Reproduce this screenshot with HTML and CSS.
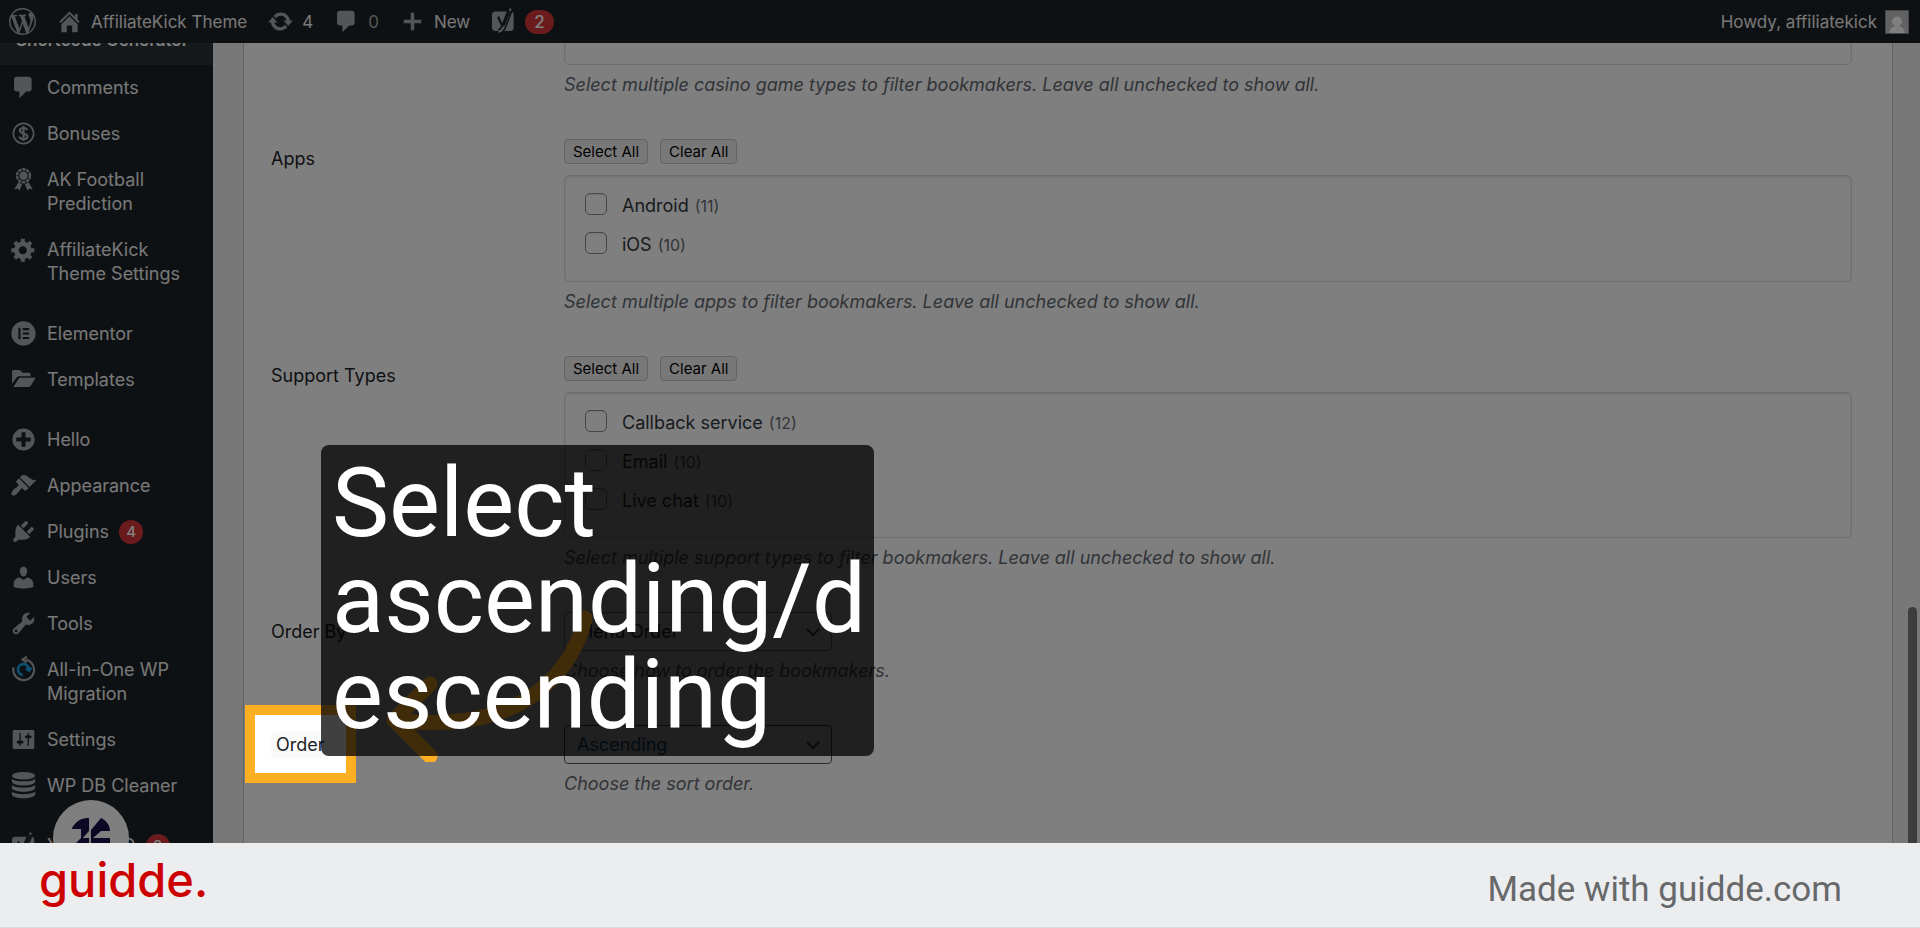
FILE: index.html
```html
<!DOCTYPE html>
<html lang="en">
<head>
  <meta charset="utf-8">
  <title>Shortcode Generator - AffiliateKick Theme</title>
  <link rel="stylesheet" href="styles.css">
</head>
<body>

<div class="stage">

<header class="topbar">
  <a href="#" class="item" aria-label="WordPress"><svg class="icon" viewBox="0 0 20 20"><path d="M20 10c0-5.51-4.49-10-10-10C4.48 0 0 4.49 0 10c0 5.52 4.48 10 10 10 5.51 0 10-4.48 10-10zM7.78 15.37L4.37 6.22c.55-.02 1.17-.08 1.17-.08.5-.06.44-1.13-.06-1.11 0 0-1.45.11-2.37.11-.18 0-.37 0-.58-.01C4.12 2.69 6.87 1.11 10 1.11c2.33 0 4.45.87 6.05 2.34-.68-.11-1.65.39-1.65 1.58 0 .74.45 1.36.9 2.1.35.61.55 1.36.55 2.46 0 1.49-1.4 5-1.4 5l-3.03-8.37c.54-.02.82-.17.82-.17.5-.05.44-1.25-.06-1.22 0 0-1.44.12-2.38.12-.87 0-2.33-.12-2.33-.12-.5-.03-.56 1.2-.06 1.22l.92.08 1.26 3.41zM17.41 10c.24-.64.74-1.87.43-4.25.7 1.29 1.05 2.71 1.05 4.25 0 3.29-1.73 6.24-4.4 7.78.97-2.59 1.94-5.2 2.92-7.78zM6.1 18.09C3.12 16.65 1.11 13.53 1.11 10c0-1.3.23-2.48.72-3.59C3.25 10.3 4.67 14.2 6.1 18.09zm4.03-6.63l2.58 6.98c-.86.29-1.76.45-2.71.45-.79 0-1.57-.11-2.29-.33.81-2.38 1.62-4.74 2.42-7.1z"/></svg></a>
  <a href="#" class="item"><svg class="icon" viewBox="0 0 20 20"><path d="M16 8.5l1.53 1.53-1.06 1.06L10 4.6l-6.47 6.49-1.06-1.06L10 2.5l4 4v-2h2v4zm-6-2.46l6 5.99V18h-4v-5H8v5H4v-5.97z"/></svg>AffiliateKick Theme</a>
  <a href="#" class="item"><svg class="icon" viewBox="0 0 20 20"><path d="M10.2 3.28c3.53 0 6.43 2.61 6.92 6h2.08l-3.5 4-3.5-4h2.32c-.45-1.97-2.21-3.45-4.32-3.45-1.45 0-2.73.71-3.54 1.78L4.95 5.66C6.23 4.2 8.11 3.28 10.2 3.28zm-.4 13.44c-3.52 0-6.43-2.61-6.92-6H.8l3.5-4c1.17 1.33 2.33 2.67 3.5 4H5.48c.45 1.97 2.21 3.45 4.32 3.45 1.45 0 2.73-.71 3.54-1.78l1.71 1.95c-1.28 1.46-3.15 2.38-5.25 2.38z"/></svg>4</a>
  <a href="#" class="item"><svg class="icon" viewBox="0 0 20 20"><path d="M5 2h9c1.1 0 2 .9 2 2v7c0 1.1-.9 2-2 2h-2l-5 5v-5H5c-1.1 0-2-.9-2-2V4c0-1.1.9-2 2-2z"/></svg><span class="none">0</span></a>
  <a href="#" class="item"><svg class="icon" viewBox="0 0 20 20"><path d="M16.5 8.7v2.6h-5.2v5.2H8.7v-5.2H3.5V8.7h5.2V3.5h2.6v5.2z"/></svg>New</a>
  <a href="#" class="item" aria-label="Yoast SEO"><svg class="icon" viewBox="0 0 20 20"><rect x="1.500" y="2.500" width="16" height="14.500" rx="2.500"/><path class="cut wide" d="M15.300 .5L10.500 13c-1 2.900-2 4.300-4.500 4.500"/><path class="line" d="M15.300 .5L10.500 13c-1 2.900-2 4.300-4.500 4.500"/><path class="cut" d="M6 6.500l3.300 7.500M14.700 2L10 13"/></svg><span class="badge">2</span></a>
  <a href="#" class="item account">Howdy, affiliatekick
    <svg class="avatar" viewBox="0 0 24 24"><rect class="frame" width="24" height="24"/><rect class="photo" x="1" y="1" width="22" height="22"/><circle class="person" cx="12" cy="11.500" r="5"/><path class="person" d="M4 23c1-5 4-7 8-7s7 2 8 7z"/></svg></a>
</header>

<div class="admin">

<nav class="sidebar">
  <a href="#" class="current">Shortcode Generator</a>
  <ul>
    <li><a href="#"><svg class="icon" viewBox="0 0 20 20"><path d="M5 2h9c1.100 0 2 .9 2 2v7c0 1.100-.9 2-2 2h-2l-5 5v-5H5c-1.100 0-2-.9-2-2V4c0-1.100.9-2 2-2z"/></svg>Comments</a></li>
    <li><a href="#"><svg class="icon" viewBox="0 0 20 20"><circle class="line thin" cx="10" cy="10" r="7.500"/><path class="line" d="M12.700 7.400c-.3-1-1.300-1.500-2.700-1.500-1.600 0-2.700.7-2.700 1.900 0 2.900 5.600 1.400 5.600 4.400 0 1.300-1.200 2-2.900 2s-2.800-.7-3-1.900M10 4.400v11.200"/></svg>Bonuses</a></li>
    <li><a href="#"><svg class="icon" viewBox="0 0 20 20"><circle cx="10" cy="7.200" r="3.100"/><circle class="line dotted" cx="10" cy="7.200" r="4.800"/><path d="M6.300 12l2.700 1.600-2 4.700-1.200-1.700-2.700.8zM13.700 12L11 13.600l2 4.700 1.200-1.700 2.700.8z"/></svg>AK Football Prediction</a></li>
    <li><a href="#"><svg class="icon" viewBox="0 0 20 20"><path d="M18 12h-2.180c-.17.7-.44 1.350-.81 1.930l1.540 1.540-2.100 2.100-1.540-1.540c-.58.36-1.230.63-1.910.79V19H8v-2.180c-.68-.16-1.330-.43-1.910-.79l-1.540 1.540-2.120-2.120 1.540-1.540c-.36-.58-.63-1.230-.79-1.910H1V9.030h2.170c.16-.7.44-1.350.8-1.940L2.430 5.550l2.100-2.100 1.540 1.540c.58-.37 1.240-.64 1.930-.81V2h3v2.180c.68.16 1.330.43 1.910.79l1.540-1.540 2.120 2.120-1.540 1.540c.36.59.64 1.240.8 1.940H18V12zm-8.500 1.500c1.660 0 3-1.340 3-3s-1.340-3-3-3-3 1.340-3 3 1.340 3 3 3z"/></svg>AffiliateKick Theme Settings</a></li>
    <li class="group"><a href="#"><svg class="icon" viewBox="0 0 20 20"><circle cx="10" cy="10" r="9"/><path class="cut" d="M7 5.800v8.400M9.500 6.700h4.700M9.500 10h4.700M9.500 13.300h4.700"/></svg>Elementor</a></li>
    <li><a href="#"><svg class="icon" viewBox="0 0 20 20"><path d="M1.500 13V4.500c0-.8.5-1.500 1.500-1.500h4c1.200 0 1.500 2 2.500 2h4.500c.8 0 1.200.5 1.200 1.200V7.500H7c-1 0-1.500.3-2 1zM2.500 15.500l3.800-5.800c.4-.7.9-1 1.700-1h11l-3.500 5.800c-.4.7-.9 1-1.700 1z"/></svg>Templates</a></li>
    <li class="group"><a href="#"><svg class="icon" viewBox="0 0 20 20"><circle cx="10" cy="10" r="8.200"/><path class="cut bold" d="M10 4.600v10.800M4.600 10h10.800"/></svg>Hello</a></li>
    <li><a href="#"><svg class="icon" viewBox="0 0 20 20"><path d="M14.480 11.060L7.410 3.990l1.500-1.500c.5-.56 2.300-.47 3.510.32 1.210.8 1.430 1.280 2.910 2.100 1.180.64 2.450 1.260 4.450.85zm-.71.71L6.700 4.700 4.930 6.470c-.39.39-.39 1.020 0 1.410l1.060 1.060c.39.39.39 1.030 0 1.420-.6.6-1.430 1.110-2.210 1.690-.35.26-.7.53-1.010.84C1.430 14.230.4 16.080 1.400 17.070c.99 1 2.840-.03 4.180-1.360.31-.31.58-.66.85-1.020.57-.78 1.080-1.610 1.690-2.210.39-.39 1.020-.39 1.410 0l1.060 1.060c.39.39 1.020.39 1.410 0z"/></svg>Appearance</a></li>
    <li><a href="#"><svg class="icon" viewBox="0 0 20 20"><path d="M13.110 4.360L9.870 7.600 8 5.730l3.240-3.240c.35-.34 1.050-.2 1.560.32.52.51.66 1.210.31 1.550zm-8 1.770l.91-1.120 9.010 9.010-1.190.84c-.71.71-2.630 1.160-3.820 1.160H6.140L4.900 17.260c-.59.59-1.540.59-2.120 0-.59-.58-.59-1.530 0-2.120l1.240-1.240v-3.880c0-1.130.4-3.190 1.090-3.890zm7.260 3.970l3.240-3.240c.34-.35 1.040-.21 1.550.31.52.51.66 1.210.31 1.550l-3.240 3.250z"/></svg>Plugins <span class="badge">4</span></a></li>
    <li><a href="#"><svg class="icon" viewBox="0 0 20 20"><path d="M10 9.250c-2.270 0-2.730-3.440-2.730-3.440C7 4.020 7.820 2 9.970 2c2.160 0 2.980 2.020 2.710 3.810 0 0-.41 3.440-2.680 3.440zm0 2.570L12.720 10c2.390 0 4.520 2.330 4.520 4.530v2.490s-3.650 1.130-7.240 1.130c-3.650 0-7.240-1.130-7.240-1.130v-2.490c0-2.250 1.940-4.480 4.470-4.480z"/></svg>Users</a></li>
    <li><a href="#"><svg class="icon" viewBox="0 0 20 20"><path d="M16.680 9.770c-1.340 1.340-3.300 1.670-4.950.99l-5.410 6.520c-.99.99-2.590.99-3.580 0s-.99-2.590 0-3.570l6.520-5.420c-.68-1.650-.35-3.610.99-4.950 1.280-1.280 3.120-1.620 4.720-1.060l-2.890 2.890 2.820 2.820 2.860-2.870c.53 1.580.18 3.390-1.080 4.650zM3.810 16.210c.4.39 1.040.39 1.430 0 .4-.4.4-1.040 0-1.430-.39-.4-1.030-.4-1.430 0-.39.39-.39 1.030 0 1.430z"/></svg>Tools</a></li>
    <li><a href="#"><svg class="icon" viewBox="0 0 20 20"><path class="line" d="M2.600 8.500A7.700 7.700 0 1 0 11.500 2.600M12.500 .5L9.300 2.600l3 2.300"/><path class="line blue" d="M9.500 14a4 4 0 1 1 4.400-4.500M11.800 9.200l2.400 1.600 1.600-2.300"/></svg>All-in-One WP Migration</a></li>
    <li><a href="#"><svg class="icon" viewBox="0 0 20 20"><path d="M18 16V4c0-.55-.45-1-1-1H3c-.55 0-1 .45-1 1v12c0 .55.45 1 1 1h14c.55 0 1-.45 1-1zM8 11h1c.55 0 1 .45 1 1s-.45 1-1 1H8v1.500c0 .28-.22.5-.5.5s-.5-.22-.5-.5V13H6c-.55 0-1-.45-1-1s.45-1 1-1h1V5.500c0-.28.22-.5.5-.5s.5.22.5.5V11zm5-2h-1c-.55 0-1-.45-1-1s.45-1 1-1h1V5.500c0-.28.22-.5.5-.5s.5.22.5.5V7h1c.55 0 1 .45 1 1s-.45 1-1 1h-1v5.500c0 .28-.22.5-.5.5s-.5-.22-.5-.5V9z"/></svg>Settings</a></li>
    <li><a href="#"><svg class="icon" viewBox="0 0 20 20"><ellipse cx="10" cy="2.800" rx="8.600" ry="2.800"/><path d="M1.400 4.800c1 2.800 16.200 2.800 17.200 0v2.600c-1 3.400-16.200 3.400-17.200 0zM1.400 9.500c1 2.800 16.200 2.800 17.200 0v2.600c-1 3.400-16.200 3.400-17.200 0zM1.400 14.300c1 2.800 16.200 2.800 17.200 0v2.600c-1 3.400-16.200 3.400-17.200 0z"/></svg>WP DB Cleaner</a></li>
    <li class="group"><a href="#"><svg class="icon" viewBox="0 0 20 20"><rect x="1.500" y="3.500" width="16.500" height="14.500" rx="2.500"/><path class="cut wide" d="M15.500 .5L10.500 13"/><path class="line" d="M15.500 .5L10.500 13"/><path class="cut" d="M6 7l3.300 7.500M14.900 2L10 13"/></svg>Yoast SEO <span class="badge">2</span></a></li>
  </ul>
</nav>

<main class="panel">
  <div class="field">
    <div class="label"></div>
    <div>
      <div class="choices"></div>
      <p class="hint">Select multiple casino game types to filter bookmakers. Leave all unchecked to show all.</p>
    </div>
  </div>

  <div class="field">
    <div class="label" id="apps">Apps</div>
    <div>
      <div class="buttons"><button type="button">Select All</button><button type="button">Clear All</button></div>
      <div class="choices" role="group" aria-labelledby="apps">
        <label><input type="checkbox">Android <small>(11)</small></label>
        <label><input type="checkbox">iOS <small>(10)</small></label>
      </div>
      <p class="hint">Select multiple apps to filter bookmakers. Leave all unchecked to show all.</p>
    </div>
  </div>

  <div class="field">
    <div class="label" id="support">Support Types</div>
    <div>
      <div class="buttons"><button type="button">Select All</button><button type="button">Clear All</button></div>
      <div class="choices" role="group" aria-labelledby="support">
        <label><input type="checkbox">Callback service <small>(12)</small></label>
        <label><input type="checkbox">Email <small>(10)</small></label>
        <label><input type="checkbox">Live chat <small>(10)</small></label>
      </div>
      <p class="hint">Select multiple support types to filter bookmakers. Leave all unchecked to show all.</p>
    </div>
  </div>

  <div class="field">
    <label class="label" for="orderby">Order By</label>
    <div>
      <div class="select"><select id="orderby"><option>Menu Order</option></select><svg viewBox="0 0 16 16"><path d="M2 5l6 6 6-6"/></svg></div>
      <p class="hint">Choose how to order the bookmakers.</p>
    </div>
  </div>

  <div class="field">
    <label class="label" for="order">Order</label>
    <div>
      <div class="select active"><select id="order"><option>Ascending</option></select><svg viewBox="0 0 16 16"><path d="M2 5l6 6 6-6"/></svg></div>
      <p class="hint">Choose the sort order.</p>
    </div>
  </div>
</main>

</div>

<!-- floating chat launcher and scroll thumb -->
<svg class="launcher" viewBox="0 0 76 76"><circle cx="38" cy="38" r="38"/><path d="M19 28C24 20 29 18 36 18V31L28 40V29H19zM22 44l6-6h8v13H22zM38 30L48 18c5 2 9 7 9 13h-9l-8 7h17v13H38V40z"/></svg>
<div class="thumb"></div>

<!-- step annotation -->
<div class="spotlight" aria-hidden="true"><span>Order</span></div>
<svg class="arrow" viewBox="0 0 220 160"><path d="M205 16C195 62 150 135 14 118M50 82L14 118L50 154"/></svg>
<div class="caption">Select<br>ascending/d<br>escending</div>

</div>

<footer class="footer">
  <a href="#" class="brand">guidde.</a>
  <span class="made">Made with guidde.com</span>
</footer>

</body>
</html>
```
FILE: styles.css
```css
* { box-sizing:border-box; }
body {
  margin:0;
  background:#ecedef;
  font:18px/24px Inter, "Liberation Sans", sans-serif;
}
a { color:inherit; text-decoration:none; }

.stage {
  position:relative;
  height:calc(100vh - 85px);
  overflow:hidden;
}

.icon { width:27px; height:27px; flex:none; fill:#a7aaad; }
.icon .line { fill:none; stroke:#a7aaad; stroke-width:1.6; }
.icon .thin { stroke-width:1.2; }
.icon .dotted { stroke-width:1.8; stroke-dasharray:2.4 .6; }
.icon .blue { stroke:#1ba1e2; stroke-width:2; }
.icon .cut { fill:none; stroke:#1d2327; stroke-width:1.6; }
.icon .wide { stroke-width:4; }
.icon .bold { stroke-width:3; }

.badge {
  display:inline-block;
  min-width:24px;
  padding:0 7px;
  border-radius:12px;
  background:#d63638;
  color:#fff;
  font-size:15px;
  font-weight:500;
  text-align:center;
}

/* top bar */
.topbar {
  position:absolute;
  z-index:1;
  top:0;
  left:0;
  right:0;
  display:flex;
  align-items:center;
  gap:20px;
  height:43px;
  padding:0 11px 0 9px;
  background:#1d2327;
  color:#f0f0f1;
  font-size:17px;
}
.item { display:flex; align-items:center; gap:8px; }
.none { color:#a7aaad; }
.topbar .badge { padding:0 9px; font-size:17px; }
.account { margin-left:auto; }
.avatar { width:24px; height:24px; }
.avatar .frame { fill:#8c8f94; }
.avatar .photo { fill:#c4c4c4; }
.avatar .person { fill:#fff; }

.admin { display:flex; min-height:100%; background:#f0f0f1; }

/* side menu */
.sidebar { width:213px; flex:none; background:#1d2327; color:#f0f0f1; }
.current {
  display:block;
  padding:28px 16px 13px;
  background:#2c3338;
  color:#fff;
  font-size:17px;
  font-weight:600;
  white-space:nowrap;
}
.sidebar ul { margin:0; padding:0; list-style:none; }
.sidebar li a {
  display:grid;
  grid-template-columns:27px auto 1fr;
  column-gap:10px;
  padding:11px 12px 11px 10px;
}
.sidebar .icon { margin:-2px 0 -1px; }
.sidebar .badge { justify-self:start; }
.group { margin-top:14px; }

/* form */
.panel {
  flex:1;
  margin:0 27px 0 30px;
  padding:0 40px 0 27px;
  border:solid #c3c4c7;
  border-width:0 1px;
  background:#fff;
  color:#1d2327;
}
.field {
  display:grid;
  grid-template-columns:293px 1fr;
  padding-bottom:42px;
}
.label { padding-top:8px; }
.buttons { display:flex; gap:12px; margin-bottom:11px; }
.buttons button {
  height:25px;
  padding:0 8px;
  border:1px solid #c3c4c7;
  border-radius:4px;
  background:#f0f0f1;
  color:#000;
  font:15px/20px Inter, "Liberation Sans", sans-serif;
}
.choices {
  min-height:65px;
  padding:10px 20px 17px;
  border:1px solid #dcdcde;
  border-radius:5px;
  box-shadow:inset 0 1px 3px rgba(0,0,0,.12);
  color:#32373c;
}
.choices label { display:flex; align-items:center; height:39px; }
.choices input {
  appearance:none;
  width:22px;
  height:22px;
  margin:0 15px 3px 0;
  border:1px solid #8c8f94;
  border-radius:5px;
  box-shadow:inset 0 1px 2px rgba(0,0,0,.1);
}
.choices small { margin-left:6px; color:#646970; font-size:16px; }
.hint { margin:8px 0 0; color:#646970; font-style:italic; }

.select { position:relative; width:268px; }
.select select {
  appearance:none;
  display:block;
  width:100%;
  height:39px;
  padding:0 12px;
  border:1px solid #8c8f94;
  border-radius:4px;
  background:#fff;
  color:#2c3338;
  font:inherit;
}
.select svg {
  position:absolute;
  top:12px;
  right:11px;
  width:16px;
  height:16px;
  fill:none;
  stroke:#50575e;
  stroke-width:2;
}
.active select { border-color:#50575e; color:#135e96; }

.launcher {
  position:absolute;
  top:800px;
  left:53px;
  width:76px;
  height:76px;
  fill:#170f49;
}
.launcher circle { fill:#fff; }
.thumb {
  position:absolute;
  z-index:1;
  top:607px;
  right:3px;
  width:9px;
  height:300px;
  border-radius:5px;
  background:#7b7b7b;
}

/* annotation: the spread shadow dims everything round the box */
.spotlight {
  position:absolute;
  z-index:2;
  top:705px;
  left:245px;
  width:111px;
  height:78px;
  padding:16px 0 0 16px;
  border:10px solid #ffb022;
  background:#fff;
  box-shadow:0 0 0 200vmax rgba(0,0,0,.5);
  color:#1d2327;
}
.spotlight span {
  display:block;
  width:58px;
  padding:2px 5px;
  border-radius:4px;
  background:#fafafa;
}
.arrow {
  position:absolute;
  z-index:3;
  top:602px;
  left:380px;
  width:220px;
  height:160px;
  fill:none;
  stroke:#ffb022;
  stroke-width:15;
  stroke-linecap:round;
  stroke-linejoin:round;
}
.caption {
  position:absolute;
  z-index:4;
  top:445px;
  left:321px;
  width:553px;
  padding:10px 11px 13px;
  border-radius:8px;
  background:rgba(0,0,0,.75);
  color:#fff;
  font:96px/96px Roboto, sans-serif;
  white-space:nowrap;
}

.footer {
  display:flex;
  align-items:center;
  justify-content:space-between;
  height:85px;
  padding:0 78px 0 39px;
  border-bottom:1px solid #dcdddf;
  background:#ecedef;
}
.brand { padding-bottom:10px; color:#c00; font-size:47px; font-weight:500; line-height:48px; }
.made { padding-top:10px; color:#66686a; font:35px/40px Roboto, sans-serif; }
```
